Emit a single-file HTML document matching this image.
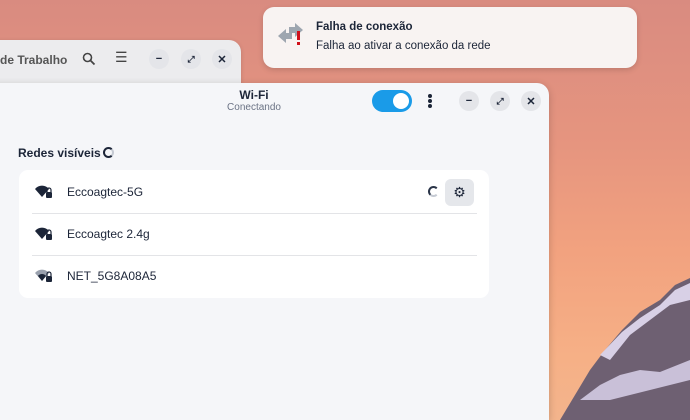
<!DOCTYPE html>
<html><head><style>
*{margin:0;padding:0;box-sizing:border-box}
html,body{width:690px;height:420px;overflow:hidden}
body{position:relative;font-family:"Liberation Sans",sans-serif;
background:linear-gradient(180deg,#d98b80 0%,#e6957f 35%,#f2a27f 60%,#f6b086 85%,#f3b48c 100%);}
.back{position:absolute;left:-10px;top:40px;width:251px;height:60px;background:#ececee;border-radius:0 12px 0 0;box-shadow:0 1px 4px rgba(0,0,0,.15)}
.main{position:absolute;left:-10px;top:83px;width:559px;height:337px;background:#f5f6f9;border-radius:0 12px 0 0;box-shadow:0 2px 8px rgba(0,0,0,.2)}
.t{position:absolute;color:#1c2538;white-space:nowrap}
.rb{position:absolute;width:20px;height:20px;border-radius:50%;background:#e4e5e9;display:flex;align-items:center;justify-content:center;font-size:11px;color:#1c2538;font-weight:bold}
.notif{position:absolute;left:263px;top:7px;width:374px;height:61px;background:#f8f3f2;border-radius:11px;box-shadow:0 2px 6px rgba(0,0,0,.15)}
.card{position:absolute;left:19px;top:170px;width:470px;height:128px;background:#fff;border-radius:9px}
.sep{position:absolute;left:13px;width:445px;height:1px;background:#e3e4e7}
</style></head><body>
<svg style="position:absolute;left:0;top:0" width="690" height="420">
<polygon points="560,420 575,395 590,370 605,350 622,330 640,312 660,300 675,285 690,278 690,420" fill="#6e6072"/>
<polygon points="600,355 622,332 640,318 660,305 675,290 690,283 690,300 670,305 650,320 630,335 610,360" fill="#d8d0e6"/>
<polygon points="580,400 600,385 620,375 640,370 660,372 690,360 690,380 650,390 610,400" fill="#c9c0d8"/>
</svg>
<div class="back">
<div class="t" style="left:10px;top:13px;font-size:12px;font-weight:bold;color:#555">de Trabalho</div>
<svg style="position:absolute;left:92px;top:12px" width="14" height="14"><circle cx="5.5" cy="5.5" r="4" fill="none" stroke="#444" stroke-width="1.6"/><path d="M8.5 8.5L12.5 12.5" stroke="#444" stroke-width="1.8"/></svg>
<div class="t" style="left:125px;top:9px;font-size:14px;color:#444">&#9776;</div>
<div class="rb" style="left:159px;top:9px">−</div>
<div class="rb" style="left:191px;top:9px;font-size:9px">⤢</div>
<div class="rb" style="left:222px;top:9px">✕</div>
</div>
<div class="main"></div>
<div class="t" style="left:229px;top:88px;font-size:12px;font-weight:bold;width:50px;text-align:center">Wi-Fi</div>
<div class="t" style="left:220px;top:102px;font-size:10px;color:#6b7385;width:68px;text-align:center">Conectando</div>
<div style="position:absolute;left:372px;top:90px;width:40px;height:22px;border-radius:11px;background:#1a9be8"><div style="position:absolute;right:3px;top:3px;width:16px;height:16px;border-radius:50%;background:#fff"></div></div>
<div style="position:absolute;left:428px;top:94px;width:4px;height:4px;border-radius:50%;background:#1c2538;box-shadow:0 5px 0 #1c2538,0 10px 0 #1c2538"></div>
<div class="rb" style="left:459px;top:91px">−</div>
<div class="rb" style="left:490px;top:91px;font-size:9px">⤢</div>
<div class="rb" style="left:521px;top:91px">✕</div>
<div class="t" style="left:18px;top:146px;font-size:12px;font-weight:bold">Redes visíveis</div>
<div style="position:absolute;left:103px;top:147px;width:11px;height:11px;border-radius:50%;border:2px solid #1c2538;border-right-color:#c5cad3"></div>
<div class="card">
<div class="sep" style="top:43px"></div><div class="sep" style="top:85px"></div>
</div>
<svg style="position:absolute;left:0;top:0" width="690" height="420">
<g fill="#1c2538">
<path d="M35 189 A9 9 0 0 1 49 189 L42 197Z"/><rect x="46" y="192" width="6" height="6" rx="1"/><path d="M47 192v-2a2 2 0 0 1 4 0v2" stroke="#1c2538" fill="none" stroke-width="1.2"/>
<path d="M35 231 A9 9 0 0 1 49 231 L42 239Z"/><rect x="46" y="234" width="6" height="6" rx="1"/><path d="M47 234v-2a2 2 0 0 1 4 0v2" stroke="#1c2538" fill="none" stroke-width="1.2"/>
<path d="M35 273 A9 9 0 0 1 49 273 L42 281Z" fill="#9aa1ae"/><path d="M38 276 A5 5 0 0 1 46 276 L42 281Z"/><rect x="46" y="276" width="6" height="6" rx="1"/><path d="M47 276v-2a2 2 0 0 1 4 0v2" stroke="#1c2538" fill="none" stroke-width="1.2"/>
</g>
</svg>
<div class="t" style="left:67px;top:185px;font-size:12px">Eccoagtec-5G</div>
<div class="t" style="left:67px;top:227px;font-size:12px">Eccoagtec 2.4g</div>
<div class="t" style="left:67px;top:269px;font-size:12px">NET_5G8A08A5</div>
<div style="position:absolute;left:428px;top:186px;width:11px;height:11px;border-radius:50%;border:2px solid #2a3448;border-right-color:transparent;border-bottom-color:#c5cad3"></div>
<div style="position:absolute;left:445px;top:179px;width:29px;height:27px;border-radius:6px;background:#e5e7eb;text-align:center;line-height:27px;font-size:14px;color:#1c2538">⚙</div>
<div class="notif">
<div class="t" style="left:53px;top:14px;font-size:11.5px;font-weight:bold">Falha de conexão</div>
<div class="t" style="left:53px;top:33px;font-size:11.5px">Falha ao ativar a conexão da rede</div>
</div>
<svg style="position:absolute;left:0;top:0" width="690" height="420">
<path d="M278 36 L286 29 L286 33 L292 33 L292 39 L286 39 L286 43Z M303 30 L295 23 L295 27 L289 27 L289 33 L295 33 L295 37Z" fill="#9ea6b0"/>
<rect x="297" y="31" width="3" height="9" fill="#d0101a"/><rect x="297" y="42" width="3" height="3" fill="#d0101a"/>
</svg>
</body></html>
